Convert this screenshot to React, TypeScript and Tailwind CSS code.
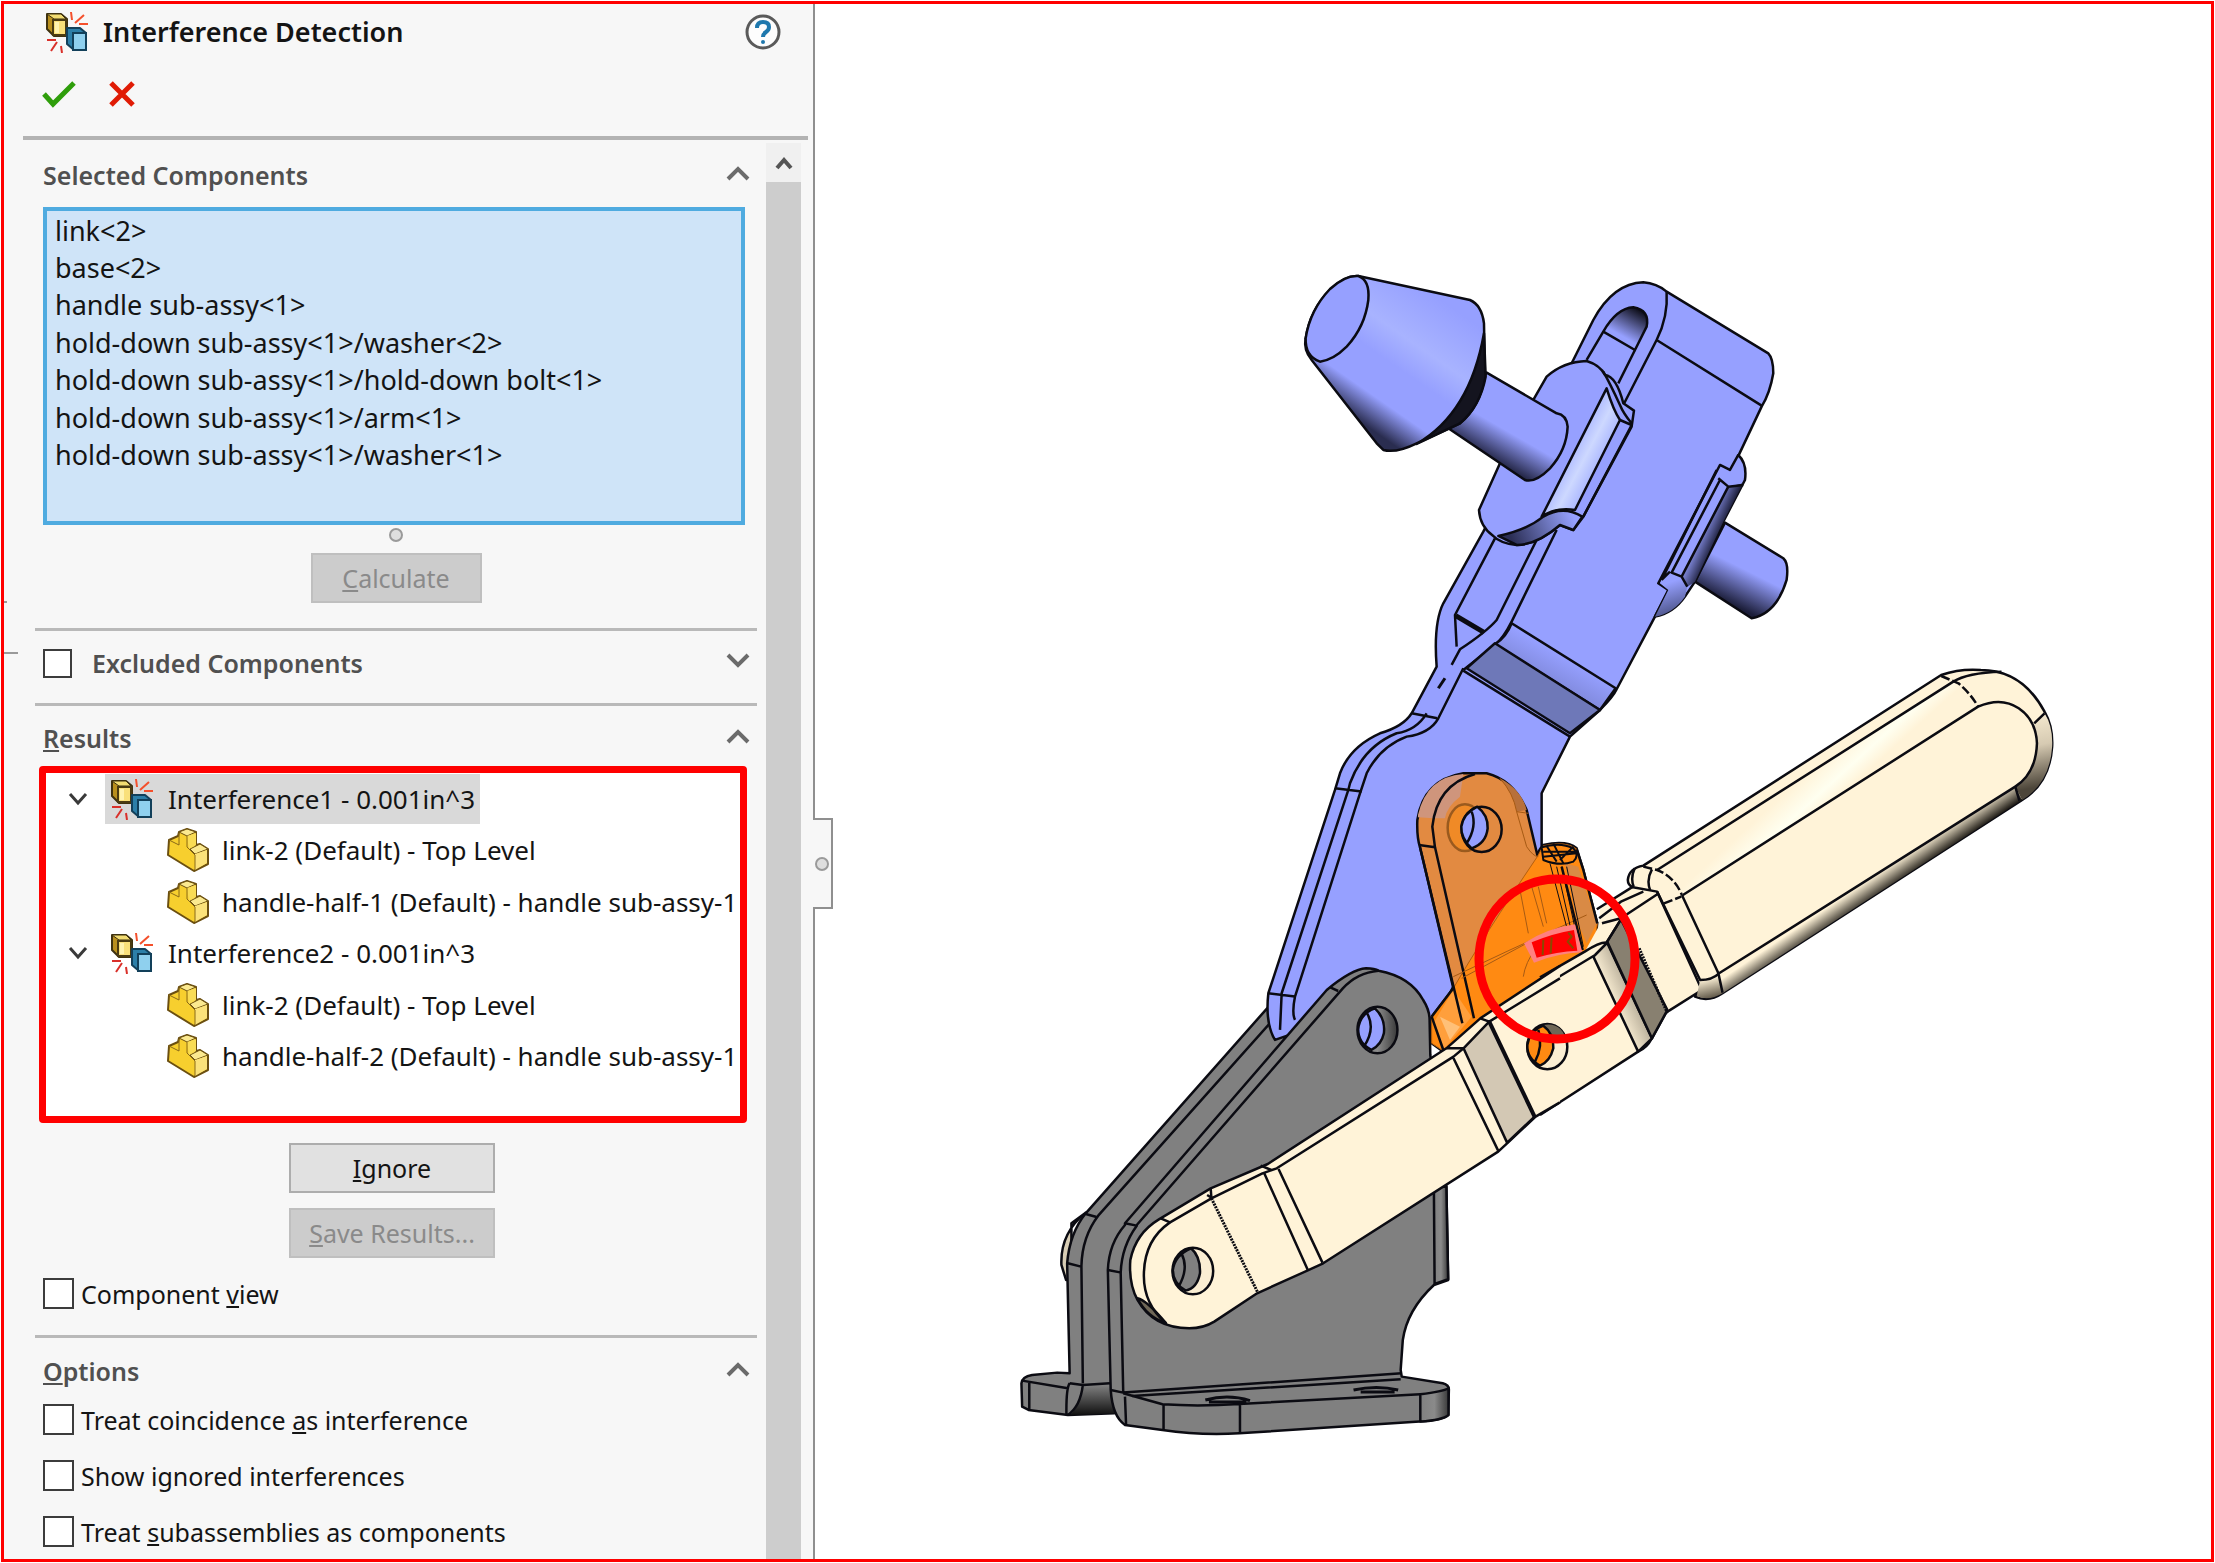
import type { ReactNode } from 'react';

const selectedComponents = [
  'link<2>',
  'base<2>',
  'handle sub-assy<1>',
  'hold-down sub-assy<1>/washer<2>',
  'hold-down sub-assy<1>/hold-down bolt<1>',
  'hold-down sub-assy<1>/arm<1>',
  'hold-down sub-assy<1>/washer<1>',
];

const results = [
  {
    name: 'Interference1 - 0.001in^3',
    selected: true,
    parts: ['link-2 (Default) - Top Level', 'handle-half-1 (Default) - handle sub-assy-1'],
  },
  {
    name: 'Interference2 - 0.001in^3',
    selected: false,
    parts: ['link-2 (Default) - Top Level', 'handle-half-2 (Default) - handle sub-assy-1'],
  },
];

function InterferenceIcon() {
  return (
    <svg viewBox="0 0 42 42" className="size-[42px] shrink-0" fill="none" aria-hidden="true">
      <path d="M1 3H15L21 8V25H8L1 18Z" fill="#b98f1d" stroke="#3f3210" strokeWidth="2" strokeLinejoin="round" />
      <path d="M1 3H15L20 8H8Z" fill="#f2dc72" stroke="#3f3210" strokeWidth="1" />
      <path d="M7 9H20V24H7Z" fill="#f9e07a" stroke="#4a3b12" strokeWidth="2" />
      <path d="M9 11H13V22H9Z" fill="#fff3b0" />
      <path d="M21 17H34L40 22V39H28L21 33Z" fill="#2c7fa8" stroke="#12405a" strokeWidth="2" strokeLinejoin="round" />
      <path d="M27 22H40V39H27Z" fill="#8fd0ee" stroke="#12405a" strokeWidth="2" />
      <path d="M25 1L26 9M38 4L29 12M33 13H42" stroke="#f4502c" strokeWidth="2" />
      <path d="M1 29H10M11 31L5 40M15 35L16 42" stroke="#d9302a" strokeWidth="2" />
    </svg>
  );
}

function PartIcon() {
  return (
    <svg viewBox="0 0 42 44" className="h-11 w-[42px] shrink-0" strokeLinejoin="round" aria-hidden="true">
      <path
        d="M2 12L11 8L12 4L20 1L29 4V17L33 16L41 21V36L27 43L1 27Z"
        fill="#f7cf2e"
        stroke="#6b4f10"
        strokeWidth="2"
      />
      <path d="M12 4L20 1L29 4L20 8ZM23 21L33 16L41 21L28 26Z" fill="#fbe98f" stroke="#6b4f10" strokeWidth="1" />
      <path d="M20 8L29 5V17L22 21Z" fill="#f9dc55" />
      <path d="M28 26L40 22V35L28 42Z" fill="#fbe27a" />
      <path d="M12 5V17L2 12M20 8V19L28 27V42" fill="none" stroke="#8a6a18" strokeWidth="1" />
    </svg>
  );
}

function Chevron({ down = false }: { down?: boolean }) {
  return (
    <svg viewBox="0 0 24 16" className="h-4 w-6" fill="none" stroke="#6b6b6b" strokeWidth="4" aria-hidden="true">
      {down ? <path d="M2 2L12 12L22 2" /> : <path d="M2 14L12 4L22 14" />}
    </svg>
  );
}

function SectionHeader({ label, down, children }: { label: string; down?: boolean; children: ReactNode }) {
  return (
    <div className="flex h-[60px] items-center justify-between pr-[7px] pl-2">
      <div className="flex items-center gap-5 pt-1 font-semibold text-[#505050]">{children}</div>
      <button type="button" aria-label={label}>
        <Chevron down={down} />
      </button>
    </div>
  );
}

function CheckOption({ children }: { children: ReactNode }) {
  return (
    <label className="flex h-[31px] items-center gap-[7px] pl-2">
      <input type="checkbox" className="size-[31px] shrink-0 appearance-none border-2 border-[#3c3c3c] bg-white" />
      <span>{children}</span>
    </label>
  );
}

function ClampModel() {
  return (
    <svg
      viewBox="815 4 1396 1555"
      className="h-auto w-full [&_*]:[vector-effect:non-scaling-stroke]"
      fill="none"
      stroke="#0b0b12"
      strokeWidth="2.5"
      strokeLinejoin="round"
      role="img"
      aria-label="Toggle clamp assembly"
    >
      <defs>
        <linearGradient id="cone" gradientUnits="userSpaceOnUse" x1="440" y1="120" x2="190" y2="480">
          <stop offset="0" stopColor="#96a0ff" />
          <stop offset="0.35" stopColor="#a8b3ff" />
          <stop offset="0.55" stopColor="#96a0ff" />
          <stop offset="0.8" stopColor="#96a0ff" />
          <stop offset="1" stopColor="#2a2d50" />
        </linearGradient>
        <linearGradient id="shank" gradientUnits="userSpaceOnUse" x1="740" y1="430" x2="625" y2="630">
          <stop offset="0.55" stopColor="#96a0ff" />
          <stop offset="1" stopColor="#1c1e3a" />
        </linearGradient>
        <linearGradient id="rod" gradientUnits="userSpaceOnUse" x1="1420" y1="870" x2="1330" y2="1050">
          <stop offset="0.45" stopColor="#96a0ff" />
          <stop offset="1" stopColor="#1c1e3a" />
        </linearGradient>
        <linearGradient id="slot" gradientUnits="userSpaceOnUse" x1="1030" y1="260" x2="1075" y2="180">
          <stop offset="0" stopColor="#96a0ff" />
          <stop offset="1" stopColor="#10101c" />
        </linearGradient>
        <linearGradient id="lip" gradientUnits="userSpaceOnUse" x1="700" y1="880" x2="880" y2="800">
          <stop offset="0" stopColor="#2b2e55" />
          <stop offset="0.6" stopColor="#6d76bd" />
          <stop offset="1" stopColor="#96a0ff" />
        </linearGradient>
        <linearGradient id="strip" gradientUnits="userSpaceOnUse" x1="860" y1="600" x2="965" y2="655">
          <stop offset="0" stopColor="#a4b0ff" />
          <stop offset="0.5" stopColor="#cdd8ff" />
          <stop offset="1" stopColor="#a4b0ff" />
        </linearGradient>
        <linearGradient id="washer" gradientUnits="userSpaceOnUse" x1="1265" y1="825" x2="1320" y2="850">
          <stop offset="0" stopColor="#96a0ff" />
          <stop offset="1" stopColor="#1c1e3a" />
        </linearGradient>
        <linearGradient id="washerEnd" gradientUnits="userSpaceOnUse" x1="1160" y1="1000" x2="1190" y2="1090">
          <stop offset="0" stopColor="#96a0ff" />
          <stop offset="1" stopColor="#4c5388" />
        </linearGradient>
        <linearGradient id="bendTop" gradientUnits="userSpaceOnUse" x1="880" y1="1235" x2="835" y2="1315">
          <stop offset="0" stopColor="#96a0ff" />
          <stop offset="1" stopColor="#8089dc" />
        </linearGradient>
        <linearGradient id="gripTop" gradientUnits="userSpaceOnUse" x1="770" y1="405" x2="850" y2="490">
          <stop offset="0" stopColor="#fff3d8" />
          <stop offset="0.6" stopColor="#fffff0" />
          <stop offset="1" stopColor="#fff3d8" />
        </linearGradient>
        <linearGradient id="gripBottom" gradientUnits="userSpaceOnUse" x1="930" y1="735" x2="965" y2="785">
          <stop offset="0" stopColor="#fff3d8" />
          <stop offset="1" stopColor="#17140f" />
        </linearGradient>
        <linearGradient id="gripEnd" gradientUnits="userSpaceOnUse" x1="1400" y1="200" x2="1450" y2="440">
          <stop offset="0" stopColor="#fff3d8" />
          <stop offset="0.5" stopColor="#d6cab2" />
          <stop offset="1" stopColor="#4d463a" />
        </linearGradient>
        <linearGradient id="gripHeel" gradientUnits="userSpaceOnUse" x1="485" y1="1015" x2="500" y2="1075">
          <stop offset="0" stopColor="#fff3d8" />
          <stop offset="1" stopColor="#5c5445" />
        </linearGradient>
        <linearGradient id="bend" gradientUnits="userSpaceOnUse" x1="200" y1="1080" x2="270" y2="1050">
          <stop offset="0" stopColor="#fff3d8" />
          <stop offset="1" stopColor="#b5ab97" />
        </linearGradient>
        <linearGradient id="steel" x1="0" x2="1">
          <stop offset="0" stopColor="#808080" />
          <stop offset="0.5" stopColor="#8a8a8a" />
          <stop offset="1" stopColor="#3a3a3a" />
        </linearGradient>
        <linearGradient id="under" x1="0" x2="0" y1="0" y2="1">
          <stop offset="0" stopColor="#808080" />
          <stop offset="1" stopColor="#101010" />
        </linearGradient>
      </defs>

      {/* far base plate */}
      <g transform="translate(1000 940) scale(0.3571 0.3333)">
        <path d="M240 818Q168 880 172 975L185 1020L200 1020V850Z" fill="#d8cdb5" />
        <path
          d="M748 205L240 820Q195 880 188 970L195 1300L160 1298L90 1305Q62 1310 60 1330L62 1400L80 1410L190 1425L320 1420L400 1000L800 300Z"
          fill="#808080"
        />
        <path d="M232 1335H305L330 1420L195 1425Q225 1400 232 1335Z" fill="url(#under)" stroke="none" />
        <path d="M760 245L275 827Q230 890 228 978L232 1330M240 822L273 832M190 970L227 980M195 1330L232 1335L308 1330M62 1322L190 1345M82 1328V1408M195 1330Q185 1345 186 1425M232 1335Q225 1400 190 1425" />
      </g>

      {/* hold-down arm */}
      <g transform="translate(1280 250) scale(0.3333)">
        <path d="M1335 818L1510 925Q1527 940 1520 990Q1490 1090 1415 1105L1245 995Z" fill="url(#rod)" />
        <path
          d="M880 330L940 210Q1000 100 1090 97Q1130 100 1160 125L1465 310Q1480 325 1480 370Q1470 430 1445 470L1360 650L1125 1100L1010 1318Q1000 1340 960 1380L870 1460L800 1600L785 1630V1790L520 2210L440 2370L100 2330L-15 2370Q-45 2320 -35 2230L165 1620L180 1570Q210 1490 300 1450Q370 1430 395 1390L470 1250Q460 1120 490 1060L610 845Z"
          fill="#96a0ff"
        />
        <path d="M970 245Q1010 175 1060 172Q1110 180 1100 230L1065 300Z" fill="url(#slot)" />
        <path d="M920 330L970 245M1065 300L1015 400M1160 125Q1165 200 1130 270L1030 465M1130 270L1445 467" />
        <path d="M645 865L525 1095L530 1190M770 870L650 1110Q620 1145 540 1198L515 1245M830 840L695 1115Q670 1165 645 1185L550 1260" />
        <path d="M527 1097L612 1147" strokeWidth="5" />
        <path d="M695 1120L1007 1315L960 1380L645 1183Q680 1160 695 1120Z" fill="url(#bendTop)" />
        <path d="M645 1180L960 1380L870 1450L560 1255Z" fill="#6e78b8" />
        <path d="M550 1262L870 1460" />
        <path d="M550 1255L475 1405Q450 1450 380 1460Q300 1490 260 1570L240 1630L45 2240Q35 2290 45 2310" />
        <path d="M440 1390Q410 1440 350 1450Q250 1490 210 1600L205 1620L5 2230L0 2340M395 1390L472 1405M165 1615L245 1625M-35 2230L45 2240" />
        <path d="M495 1285L475 1315" strokeWidth="3" />

        {/* hold-down bolt */}
        <path
          d="M760 450L800 380Q850 335 920 333Q960 345 975 375Q1010 380 1030 460L1062 482L1055 530L910 800L880 840L840 825Q770 885 710 885Q660 880 640 858Q600 830 597 780L660 640Z"
          fill="#96a0ff"
        />
        <path d="M980 415Q1000 480 1020 510L885 780Q830 770 785 800Z" fill="url(#strip)" />
        <path d="M655 858Q740 840 790 800Q850 765 907 800L880 840L840 825Q770 885 710 885Z" fill="url(#lip)" />
        <path d="M970 365Q990 400 1020 465Q1030 490 1055 520M1055 525L910 800M1020 510L1055 525" />
        <path d="M620 368L830 490Q860 495 863 530Q860 600 810 655Q765 700 735 690L505 535Z" fill="url(#shank)" />
        <path
          d="M235 78L570 150Q605 165 612 220L615 380Q600 470 540 520L410 580Q350 610 310 600L290 580L95 330Q70 300 77 265Q90 180 150 120Q195 75 235 78Z"
          fill="url(#cone)"
        />
        <path d="M612 250L617 380Q600 470 540 520L410 582Q570 490 612 250Z" fill="#14141f" />
        <path d="M235 78Q270 90 265 150Q255 230 200 290Q160 330 120 335Q75 320 77 265Q90 180 150 117Q195 75 235 78Z" fill="#96a0ff" />

        {/* washer on the far side */}
        <path
          d="M1375 615Q1402 640 1395 690L1330 815L1245 995L1215 1040Q1180 1090 1125 1100L1165 1020L1135 1000L1320 645L1350 660Z"
          fill="#96a0ff"
        />
        <path d="M1165 1020L1140 1000L1175 968L1205 980L1222 1010L1215 1040Q1180 1090 1125 1100Z" fill="url(#washerEnd)" stroke="none" />
        <path d="M1345 710L1390 700L1330 815L1245 995L1222 1010L1205 980Z" fill="url(#washer)" stroke="none" />
        <path d="M1310 660L1145 990M1320 690L1175 968L1205 980L1345 710M1315 685L1345 710L1390 705M1145 990L1170 965M1205 980L1222 1010" />
      </g>

      {/* near base plate */}
      <g transform="translate(1000 940) scale(0.3571 0.3333)">
        <path
          d="M350 850L915 150Q985 88 1025 85Q1050 86 1060 92Q1150 110 1185 180Q1203 210 1203 240L1205 345L1250 740L1255 1020L1215 1035Q1140 1110 1128 1200L1122 1290L1125 1310L1240 1330Q1258 1335 1257 1350L1255 1425Q1240 1440 1175 1445L670 1480Q560 1487 455 1470L350 1455Q315 1430 310 1350L302 990Q305 910 350 855Z"
          fill="#808080"
        />
        <path d="M1215 740H1250L1255 1018L1217 1032Z" fill="url(#steel)" />
        <path d="M1177 1363Q1240 1355 1256 1345V1425Q1240 1440 1177 1445Z" fill="url(#steel)" />
        <path d="M383 855L960 145Q1000 98 1060 92M350 850L383 857Q340 920 338 1000L345 1355M302 990L340 998M310 1350L345 1358L1125 1300M370 1368L1122 1318" />
        <path d="M345 1360L455 1393Q560 1400 670 1392L1177 1363M350 1370L353 1453M458 1395V1470M672 1395V1480M925 142L947 153" />
        <path d="M575 1380Q640 1362 700 1382M585 1386H690M990 1350Q1055 1335 1115 1350M1010 1356H1105" strokeWidth="3" />
        <ellipse cx="1057" cy="270" rx="56" ry="70" fill="url(#steel)" />
        <path d="M1050 205Q1080 235 1075 280Q1068 315 1040 330Q1003 310 1003 268Q1008 220 1050 205Z" fill="#96a0ff" />
        <path d="M1028 220Q1052 265 1020 318" />
      </g>

      {/* highlighted link */}
      <g transform="translate(1400 760) scale(0.3333)">
        <path
          d="M60 262Q50 230 52 180Q70 60 190 40L260 40Q340 60 380 150L412 285L430 255Q500 240 530 265L550 330L592 490L585 560L230 790L130 875L95 850V770L160 685Z"
          fill="#e28a41"
        />
        <path d="M54 165Q80 50 190 42L180 110Q140 140 135 175H100L54 172Z" fill="#cf957c" stroke="none" />
        <path d="M412 290L430 257Q500 242 530 267L550 330L592 490L585 560L230 790L130 873L95 850V770L160 685Q250 530 412 290Z" fill="#ff8a12" stroke="#b45f0e" strokeWidth="1" />
        <path d="M535 320L590 490L560 550L530 480L495 310Z" fill="#d98a45" stroke="none" />
        <path d="M100 790L160 690L215 770L130 870Z" fill="#ff9f3c" stroke="none" />
        <path d="M120 770L180 800L150 840Z" fill="#ffc078" stroke="none" />
        <path d="M300 55Q365 90 380 150L350 155Q340 100 300 55Z" fill="#b8703a" stroke="none" />
        <path d="M60 262L187 790M105 262L222 775M57 255L105 262L97 200Q110 75 225 42M95 770L130 870" />
        <path d="M300 55Q340 100 350 155L380 260Q400 290 415 290M350 155L385 160M360 390L385 520M395 380L430 500M415 380L440 490M160 650L330 570L560 465M185 655L380 550M370 650Q375 610 410 560" stroke="#a65a14" strokeWidth="1" />
        <path d="M470 320L520 540M485 320L535 550M500 320L550 560M450 310L505 520" strokeWidth="1" />
        <path d="M485 320L548 570M530 268L550 330L592 490" />
        <path d="M425 262Q480 245 520 265Q540 285 520 305Q480 320 430 300L425 262M430 275H525M430 290L530 280M460 250L490 310M480 300L520 260M440 258L470 305" strokeWidth="2" />
        <path d="M95 770L160 685" />
        <ellipse cx="195" cy="203" rx="52" ry="70" fill="#f08a26" stroke="#9a5a1e" />
        <ellipse cx="245" cy="208" rx="60" ry="68" fill="#e28a41" />
        <path d="M232 140Q265 165 263 205Q258 250 215 265Q182 235 184 200Q190 160 232 140Z" fill="#96a0ff" />
        <path d="M215 155Q232 200 200 250" />
        <path d="M372 550Q440 505 525 493L547 577Q470 580 402 608Z" fill="#ff8080" stroke="none" />
        <path d="M395 547Q460 520 522 510L532 572Q470 575 410 593Z" fill="#ff0000" stroke="none" />
        <path d="M430 540L428 585M455 532L452 580M505 518L515 530L503 545L520 565" stroke="#8a4a00" strokeWidth="2" />
      </g>

      {/* lower half of the handle */}
      <g transform="translate(1540 640) scale(0.3444 0.3333)" fill="#fff3d8">
        <path d="M0 1012L130 935L170 860L175 805L270 740L345 755L470 1050L375 1112L365 1120L325 1195Q310 1225 285 1235L0 1425Z" stroke="none" />
        <path d="M165 808L270 740M172 835L235 785L300 755M180 850L235 835L345 760M470 1050L375 1112L365 1120L325 1195Q310 1225 285 1235L0 1425" fill="none" />
        <path d="M155 950L195 908L325 1195L285 1235Z" fill="url(#bend)" />
        <path d="M195 905L235 838L370 1110L325 1195Z" fill="#888070" />
        <path d="M288 925L367 1112" strokeWidth="3" strokeDasharray="2 1" />
        <path d="M0 1045L160 945L195 908Q175 905 130 935L0 1012" />
        <path d="M235 838L195 905" />
      </g>
      <g transform="translate(1000 940) scale(0.3571 0.3333)" fill="#fff3d8">
        <path
          d="M1568 78L1345 235L1250 325L750 672L590 745L445 838Q380 880 365 960Q360 1030 385 1080Q430 1165 530 1165Q570 1165 600 1145L720 1060L865 990L905 970L1395 635L1420 610L1500 530L1568 487"
        />
        <path d="M385 1075Q410 1080 465 1150Q410 1130 385 1075Z" fill="#6f6757" />
        <path d="M1298 325L1370 245L1497 530L1420 608Z" fill="#d3c8b4" />
        <path d="M1370 245L1497 530" strokeWidth="4" />
        <path d="M450 835L478 848M580 765L595 775M1250 325L1298 325M1345 235L1370 245L1568 115" fill="none" />
        <path d="M1298 325L1270 350L775 685L735 700L592 775L475 848Q405 900 403 1000Q400 1090 465 1150M740 700L862 990M780 687L903 968M1270 355L1395 632M730 677L760 690M590 745L592 775" fill="none" />
        <path d="M592 775L722 1058" strokeWidth="3" strokeDasharray="2 1" />
        <ellipse cx="540" cy="993" rx="57" ry="70" fill="#fbeed3" />
        <path d="M535 925Q562 950 560 1000Q552 1045 520 1052Q484 1030 484 990Q490 945 535 925Z" fill="#808080" />
        <path d="M508 940Q530 985 500 1040" fill="none" />
      </g>
      <g transform="translate(1400 760) scale(0.3333)">
        <ellipse cx="442" cy="860" rx="60" ry="68" fill="#fbeed3" />
        <path d="M430 795Q490 785 500 850Q470 830 455 850Z" fill="#6f6757" stroke="none" />
        <path d="M430 797Q462 820 460 865Q450 905 420 917Q380 895 382 855Q390 810 430 797Z" fill="#ff8a12" />
        <path d="M415 810Q430 860 405 905" />
      </g>

      {/* grip */}
      <g transform="translate(1540 640) scale(0.3444 0.3333)">
        <path
          d="M255 720Q258 685 300 677L1165 105Q1220 85 1280 90Q1400 90 1465 215Q1490 260 1487 320Q1480 430 1400 480L530 1060Q490 1088 450 1070L470 1050L340 755L270 742Q255 735 255 720Z"
          fill="#fff3d8"
        />
        <path d="M340 690L1200 125L1272 200L415 765Q390 710 340 690Z" fill="url(#gripTop)" stroke="none" />
        <path d="M520 1000L1380 440L1400 480L530 1060Z" fill="url(#gripBottom)" stroke="none" />
        <path d="M1435 250L1465 220Q1490 260 1487 320Q1480 430 1400 480L1380 440Q1440 400 1443 310Z" fill="url(#gripEnd)" stroke="none" />
        <path d="M465 1020L520 1003L530 1060Q490 1085 455 1068Z" fill="url(#gripHeel)" stroke="none" />
        <path d="M340 690L1200 125Q1240 98 1340 95M415 765L1272 200Q1340 170 1390 205Q1440 240 1443 310Q1440 400 1380 440L520 1000M412 765L518 1000L530 1058M340 755L465 1020Q500 1020 520 1000" />
        <path d="M325 688Q308 720 320 752M275 685Q262 715 272 740M1435 250L1465 220M1380 440L1392 482" />
        <path d="M300 680L340 690Q390 710 412 765M360 790L410 770M1165 108L1215 130Q1250 160 1272 200" strokeDasharray="9 3" />
      </g>

      <ellipse cx="1557" cy="959" rx="78" ry="80" stroke="#ff0000" strokeWidth="9" />
    </svg>
  );
}

export default function App() {
  return (
    <div className="min-h-screen bg-white p-px font-['Noto_Sans',sans-serif] text-[25px] leading-8 text-[#141414]">
      <div className="flex min-h-[calc(100vh-2px)] border-3 border-[#ff0000]">
        <aside className="relative flex w-[811px] shrink-0 flex-col border-r-2 border-[#8f8f8f] bg-[#f7f7f7]">
          <header className="h-[132px] pr-8 pl-[42px]">
            <div className="flex h-14 items-center">
              <InterferenceIcon />
              <h1 className="ml-[15px] text-[27px] font-semibold">Interference Detection</h1>
              <button type="button" aria-label="Help" className="ml-auto">
                <svg viewBox="0 0 36 36" className="size-9" fill="none">
                  <circle cx="18" cy="18" r="16" fill="#fdfdfd" stroke="#5a5a5a" strokeWidth="3" />
                  <path d="M12 14Q12 8 18 8Q24 8 24 13Q24 16 21 18Q18 20 18 23" stroke="#1f78ad" strokeWidth="4" />
                  <circle cx="18" cy="28" r="2" fill="#1f78ad" />
                </svg>
              </button>
            </div>
            <div className="flex h-[68px] items-center gap-8">
              <button type="button" aria-label="OK" className="-ml-1">
                <svg viewBox="0 0 34 28" className="h-7 w-[34px]" fill="none">
                  <path d="M2 14L11 24L32 3" stroke="#2f9e0b" strokeWidth="5" />
                </svg>
              </button>
              <button type="button" aria-label="Cancel">
                <svg viewBox="0 0 28 28" className="size-7" fill="none">
                  <path d="M3 3L25 25M25 3L3 25" stroke="#e01b05" strokeWidth="5" />
                </svg>
              </button>
            </div>
          </header>
          <div className="mr-[5px] ml-[19px] h-1 bg-[#b3b3b3]" />

          <div className="mt-[3px] flex flex-1 pr-3">
            <main className="flex-1 pr-[9px] pl-[31px]">
              <section className="pb-[25px]">
                <SectionHeader label="Collapse Selected Components">
                  <h2>Selected Components</h2>
                </SectionHeader>
                <div className="mt-1 mr-3 ml-2 h-[318px] border-4 border-[#4fabe0] bg-[#cfe4f8] pl-2 text-[27px]">
                  <ul className="grid h-[300px] grid-rows-8 pt-px">
                    {selectedComponents.map((name) => (
                      <li key={name} className="flex items-center">
                        {name}
                      </li>
                    ))}
                  </ul>
                </div>
                <div className="mx-auto mt-[3px] size-[14px] rounded-full border-2 border-[#9a9a9a] bg-[#dedede]" />
                <button
                  type="button"
                  disabled
                  className="mx-auto mt-[11px] block h-[50px] w-[171px] border-2 border-[#bfbfbf] bg-[#cccccc] text-[#8a8a8a]"
                >
                  <u>C</u>alculate
                </button>
              </section>

              <section className="border-t-3 border-[#b9b9b9] pb-3">
                <SectionHeader label="Expand Excluded Components" down>
                  <input
                    type="checkbox"
                    id="excluded"
                    className="size-[29px] appearance-none border-2 border-[#3c3c3c] bg-white"
                  />
                  <label htmlFor="excluded">Excluded Components</label>
                </SectionHeader>
              </section>

              <section className="border-t-3 border-[#b9b9b9] pb-[26px]">
                <SectionHeader label="Collapse Results">
                  <h2>
                    <u>R</u>esults
                  </h2>
                </SectionHeader>
                <div className="mr-[10px] ml-1 h-[357px] rounded-sm border-7 border-[#ff0000] bg-white text-[26px]">
                  <ul className="grid h-[309px] grid-rows-2">
                    {results.map((result) => (
                      <li key={result.name} className="grid grid-rows-3">
                        <div className="flex items-center pl-[22px]">
                          <button type="button" aria-label="Collapse" className="mr-[17px] w-5">
                            <svg viewBox="0 0 20 14" className="h-[14px] w-5" fill="none">
                              <path d="M2 2L10 11L18 2" stroke="#3a3a3a" strokeWidth="3" />
                            </svg>
                          </button>
                          <div
                            className={`flex h-[50px] items-center gap-[15px] pr-[5px] pl-[6px] ${
                              result.selected ? 'bg-[#d9d9d9]' : ''
                            }`}
                          >
                            <InterferenceIcon />
                            <span>{result.name}</span>
                          </div>
                        </div>
                        {result.parts.map((part) => (
                          <div key={part} className="flex items-center gap-[13px] pl-[121px] whitespace-nowrap">
                            <PartIcon />
                            <span>{part}</span>
                          </div>
                        ))}
                      </li>
                    ))}
                  </ul>
                </div>
                <div className="mt-5 flex flex-col items-center gap-[15px] pr-2">
                  <button type="button" className="h-[50px] w-[206px] border-2 border-[#adadad] bg-[#e1e1e1]">
                    <u>I</u>gnore
                  </button>
                  <button
                    type="button"
                    disabled
                    className="h-[50px] w-[206px] border-2 border-[#bfbfbf] bg-[#cccccc] text-[#8a8a8a]"
                  >
                    <u>S</u>ave Results...
                  </button>
                </div>
                <div className="mt-5">
                  <CheckOption>
                    Component <u>v</u>iew
                  </CheckOption>
                </div>
              </section>

              <section className="border-t-3 border-[#b9b9b9] pt-px">
                <SectionHeader label="Collapse Options">
                  <h2>
                    <u>O</u>ptions
                  </h2>
                </SectionHeader>
                <div className="mt-[5px] flex flex-col gap-[25px]">
                  <CheckOption>
                    Treat coincidence <u>a</u>s interference
                  </CheckOption>
                  <CheckOption>
                    Show i<u>g</u>nored interferences
                  </CheckOption>
                  <CheckOption>
                    Treat <u>s</u>ubassemblies as components
                  </CheckOption>
                </div>
              </section>
            </main>

            <div className="flex w-[35px] flex-col bg-[#cdcdcd]">
              <button type="button" aria-label="Scroll up" className="flex h-[39px] items-center justify-center bg-[#f0f0f0]">
                <svg viewBox="0 0 18 14" className="h-[14px] w-[18px]" fill="none">
                  <path d="M2 12L9 4L16 12" stroke="#555555" strokeWidth="4" />
                </svg>
              </button>
            </div>
          </div>

          {/* splitter grip between the panel and the viewport */}
          <div className="absolute top-[814px] left-full flex h-[91px] w-5 items-center justify-center border-2 border-l-0 border-[#8f8f8f] bg-[#f7f7f7]">
            <div className="size-[14px] rounded-full border-2 border-[#9a9a9a] bg-[#dedede]" />
          </div>
          <div className="absolute top-[597px] left-0 h-[2px] w-[3px] bg-[#9a9a9a]" />
          <div className="absolute top-[648px] left-0 h-[2px] w-[14px] bg-[#9a9a9a]" />
        </aside>

        <div className="min-w-0 flex-1">
          <ClampModel />
        </div>
      </div>
    </div>
  );
}
